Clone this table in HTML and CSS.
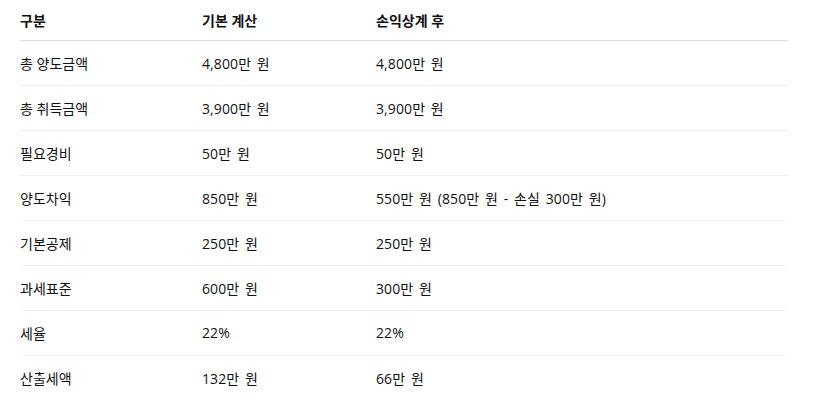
FILE: index.html
```html
<!DOCTYPE html>
<html lang="ko">
<head>
<meta charset="utf-8">
<link rel="stylesheet" href="styles.css">
</head>
<body>
<table class="tax-table">
  <colgroup>
    <col class="c1"><col class="c2"><col class="c3">
  </colgroup>
  <thead>
    <tr><th>구분</th><th>기본 계산</th><th>손익상계 후</th></tr>
  </thead>
  <tbody>
    <tr><td>총 양도금액</td><td class="val">4,800만 원</td><td class="val">4,800만 원</td></tr>
    <tr><td>총 취득금액</td><td class="val">3,900만 원</td><td class="val">3,900만 원</td></tr>
    <tr><td>필요경비</td><td class="val">50만 원</td><td class="val">50만 원</td></tr>
    <tr><td>양도차익</td><td class="val">850만 원</td><td class="val">550만 원 (850만 원 - 손실 300만 원)</td></tr>
    <tr><td>기본공제</td><td class="val">250만 원</td><td class="val">250만 원</td></tr>
    <tr><td>과세표준</td><td class="val">600만 원</td><td class="val">300만 원</td></tr>
    <tr><td>세율</td><td class="val">22%</td><td class="val">22%</td></tr>
    <tr><td>산출세액</td><td class="val">132만 원</td><td class="val">66만 원</td></tr>
  </tbody>
</table>
</body>
</html>
```
FILE: styles.css
```css
html, body {
  margin: 0;
  padding: 0;
  background: #fff;
}
body {
  padding: 0 27px 0 20px;
  font-family: "Open Sans", "Noto Sans CJK KR", sans-serif;
  font-size: 14px;
  color: #111;
}
.tax-table {
  width: 768px;
  border-collapse: collapse;
  table-layout: fixed;
}
.c1 { width: 182px; }
.c2 { width: 174px; }
.c3 { width: 412px; }
.tax-table th {
  text-align: left;
  font-weight: 700;
  height: 40px;
  padding: 0;
  box-sizing: border-box;
  border-bottom: 1px solid #dcdcdc;
  vertical-align: middle;
}
.tax-table td {
  height: 45px;
  padding: 0;
  box-sizing: border-box;
  border-bottom: 1px solid #f0f0f0;
  vertical-align: middle;
}
.tax-table td.val {
  word-spacing: 2px;
  letter-spacing: 0.1px;
}
.tax-table tbody tr:last-child td {
  border-bottom: none;
}
```
